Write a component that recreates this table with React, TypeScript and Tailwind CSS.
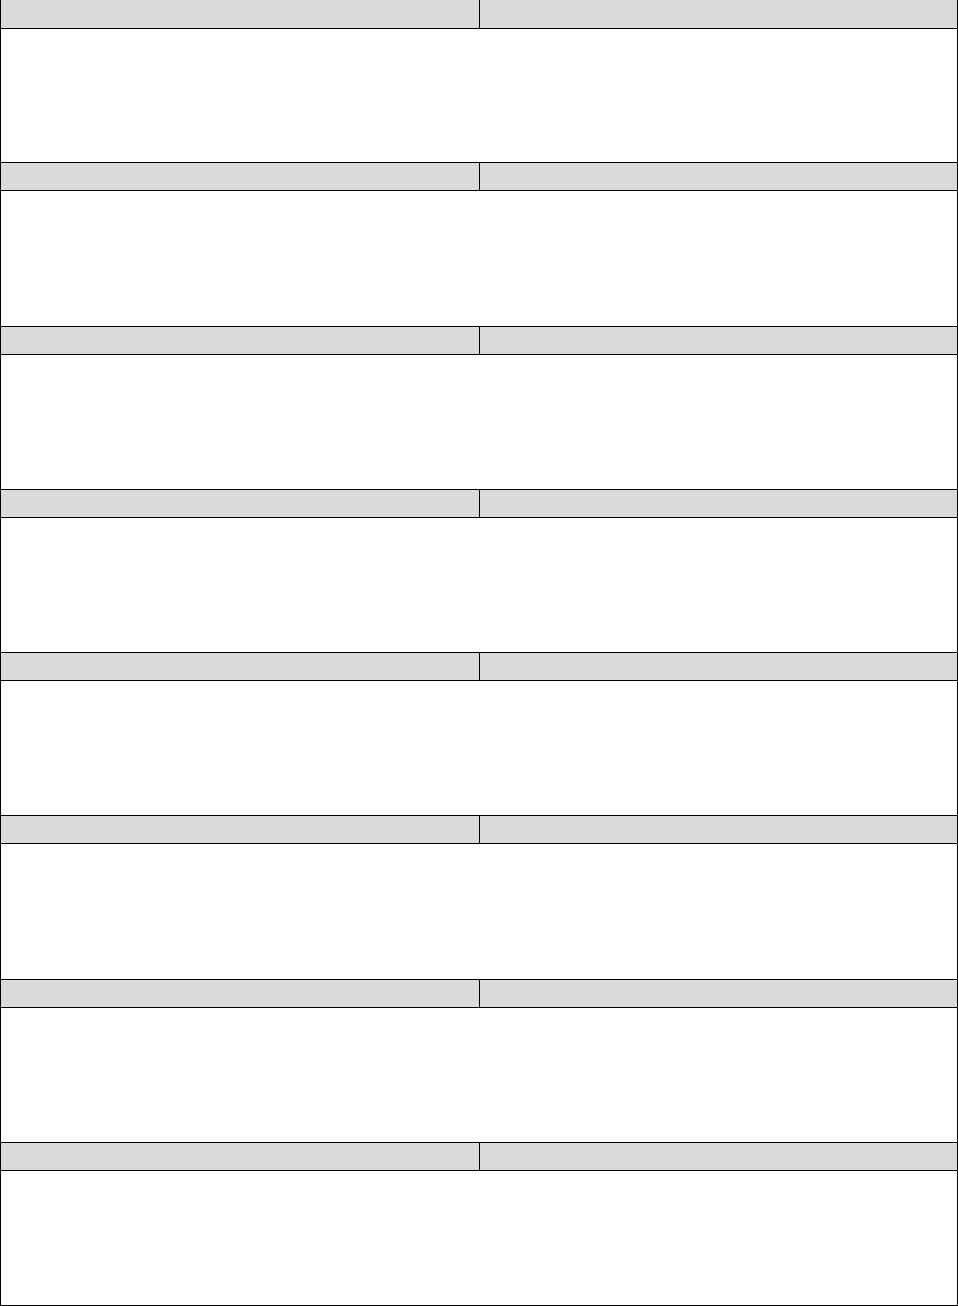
import React from 'react';

const SECTIONS = Array.from({ length: 8 }, (_, i) => i);

export default function App() {
  return (
    <div className="w-[958px] h-[1306px] bg-white font-['Liberation_Sans',sans-serif]">
      <div className="flex h-full flex-col border-x border-b border-black">
        {SECTIONS.map((i) => (
          <section key={i} className="flex flex-1 flex-col border-b border-black last:border-b-0">
            {/* Header row with two cells; the first one has no line above it */}
            <div
              className={`grid shrink-0 grid-cols-[479px_1fr] border-b border-black bg-[#d9d9d9] ${
                i === 0 ? 'h-[29px]' : 'h-[28px]'
              }`}
            >
              <div className="border-r border-black" />
              <div />
            </div>
            {/* Empty body */}
            <div className="flex-1" />
          </section>
        ))}
      </div>
    </div>
  );
}
